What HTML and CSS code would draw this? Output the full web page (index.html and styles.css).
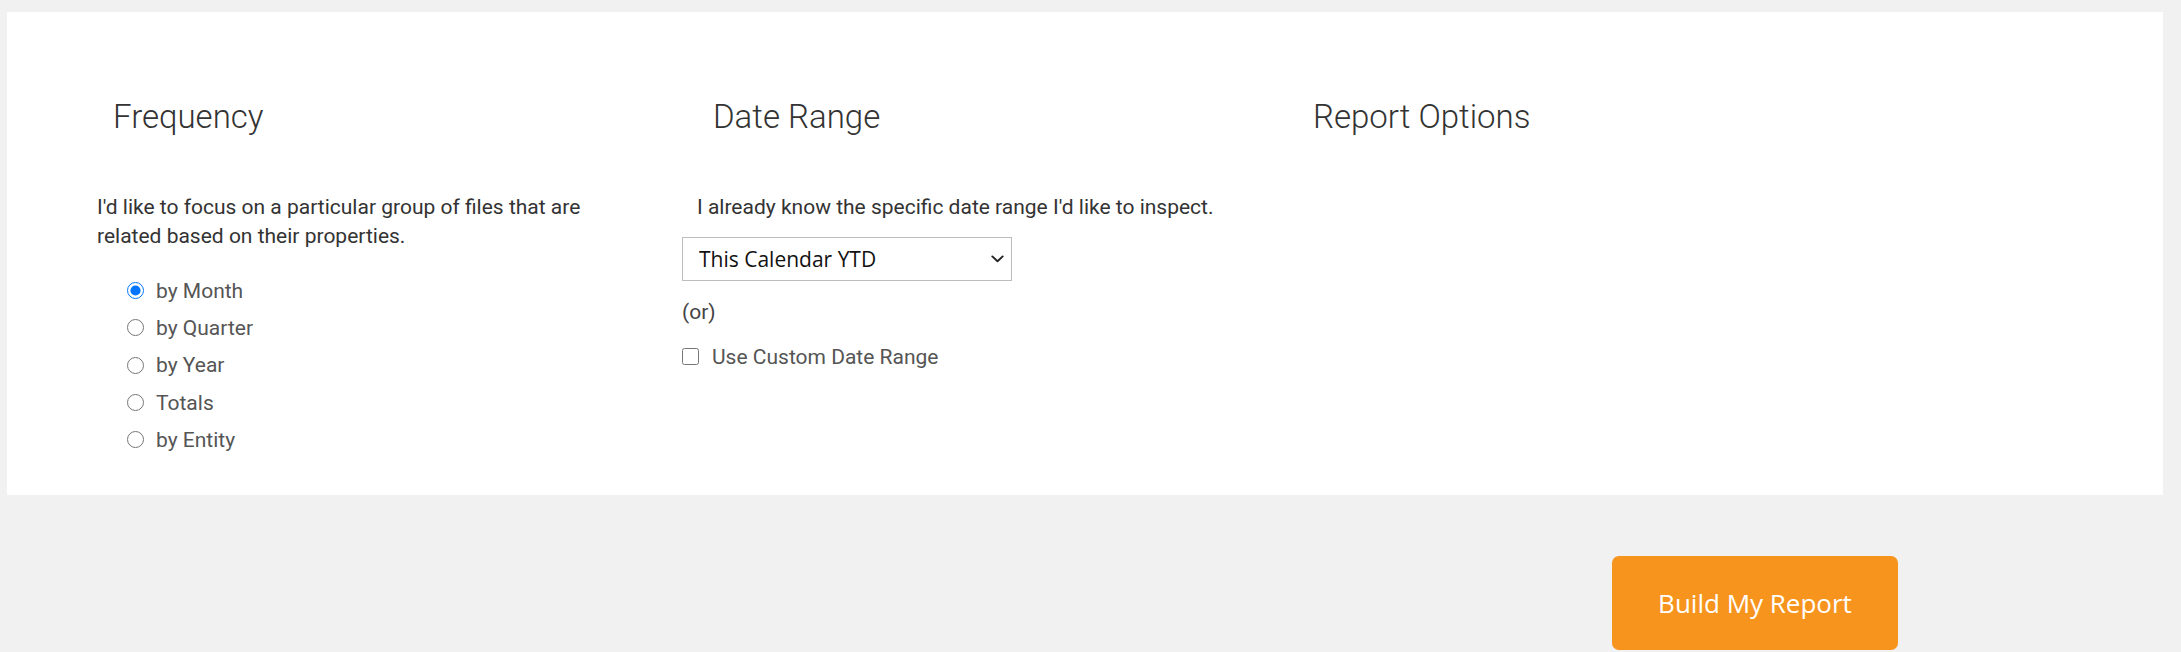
FILE: index.html
```html
<!DOCTYPE html>
<html lang="en">
<head>
<meta charset="utf-8">
<title>Report Builder</title>
<link rel="stylesheet" href="styles.css">
</head>
<body>
<main class="page">
  <section class="panel">
    <div class="col">
      <h2 class="col-title">Frequency</h2>
      <p class="intro">I'd like to focus on a particular group of files that are related based on their properties.</p>
      <ul class="radio-list">
        <li><label class="option"><input type="radio" name="freq" checked><span>by Month</span></label></li>
        <li><label class="option"><input type="radio" name="freq"><span>by Quarter</span></label></li>
        <li><label class="option"><input type="radio" name="freq"><span>by Year</span></label></li>
        <li><label class="option"><input type="radio" name="freq"><span>Totals</span></label></li>
        <li><label class="option"><input type="radio" name="freq"><span>by Entity</span></label></li>
      </ul>
    </div>
    <div class="col">
      <h2 class="col-title">Date Range</h2>
      <p class="intro">I already know the specific date range I'd like to inspect.</p>
      <div class="select-wrap">
        <select class="select">
          <option>This Calendar YTD</option>
          <option>Last Calendar Year</option>
          <option>This Fiscal YTD</option>
        </select>
        <svg class="chevron" width="13" height="8" viewBox="0 0 13 8" aria-hidden="true"><path d="M1.3 1.4 6.5 6.3l5.2-4.9" fill="none" stroke="#222" stroke-width="1.9" stroke-linecap="round" stroke-linejoin="round"/></svg>
      </div>
      <p class="or">(or)</p>
      <label class="option check"><input type="checkbox"><span>Use Custom Date Range</span></label>
    </div>
    <div class="col">
      <h2 class="col-title">Report Options</h2>
    </div>
  </section>
  <div class="actions">
    <button class="build-btn" type="button">Build My Report</button>
  </div>
</main>
</body>
</html>
```

FILE: styles.css
```css
* { box-sizing: border-box; }

html, body {
  margin: 0;
  padding: 0;
  background: #f1f1f1;
}

body {
  font-family: Roboto, "Liberation Sans", Arial, sans-serif;
  color: #333;
}

.page {
  padding: 12px 18px 0 7px;
}

.panel {
  background: #fff;
  height: 483px;
  padding: 85px 0 0 75px;
  display: flex;
}

.col {
  width: 600px;
  flex: 0 0 600px;
}

.col-title {
  margin: 0 0 56px 31px;
  font-family: Roboto, "Liberation Sans", sans-serif;
  font-weight: 300;
  font-size: 33px;
  line-height: 40px;
  color: #333;
}

.intro {
  margin: 0 0 0 15px;
  font-size: 21px;
  line-height: 29px;
  color: #333;
  max-width: 540px;
}

.radio-list {
  list-style: none;
  margin: 21px 0 0 45px;
  padding: 0;
}

.option {
  display: flex;
  align-items: center;
  height: 37.3px;
  font-size: 21px;
  color: #555;
  cursor: pointer;
}

.option input {
  width: 17px;
  height: 17px;
  margin: 0 12px 0 0;
  flex: 0 0 auto;
}

.select-wrap {
  position: relative;
  width: 330px;
  margin-top: 15px;
}

.select {
  display: block;
  width: 330px;
  height: 44px;
  padding: 0 36px 0 16px;
  border: 1px solid #bdbdbd;
  border-radius: 0;
  background: #fff;
  font-family: "Open Sans", "Noto Sans", sans-serif;
  font-size: 21px;
  color: #111;
  appearance: none;
  -webkit-appearance: none;
}

.chevron {
  position: absolute;
  right: 8px;
  top: 18px;
  pointer-events: none;
}

.or {
  margin: 17px 0 0 0;
  font-size: 21px;
  line-height: 29px;
  color: #444;
}

.check {
  margin-top: 11px;
  height: 37px;
}

.check input {
  width: 17px;
  height: 17px;
  margin-right: 13px;
}

.actions {
  display: flex;
  padding: 61px 0 0 1605px;
}

.build-btn {
  width: 286px;
  height: 94px;
  border: none;
  border-radius: 7px;
  background: #f7941e;
  color: #fff;
  font-family: "Open Sans", "Noto Sans", sans-serif;
  font-size: 26px;
  font-weight: 400;
  cursor: pointer;
}
```
